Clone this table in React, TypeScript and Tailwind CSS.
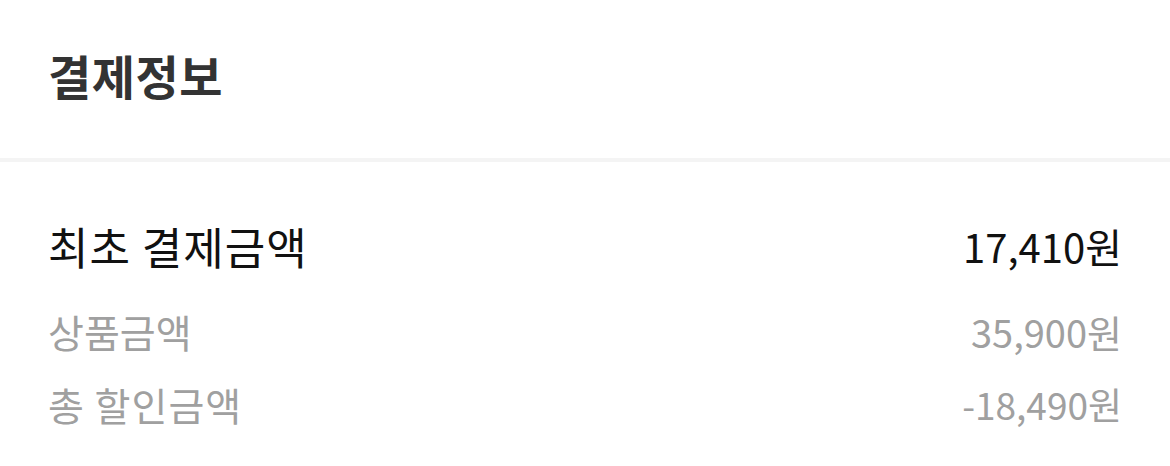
import React from 'react';

const font = { fontFamily: '"Noto Sans CJK KR", "Noto Sans", sans-serif' };

export default function App() {
  return (
    <div className="w-[1170px] h-[466px] bg-white overflow-hidden" style={font}>
      <div className="h-[158px] px-12 flex items-center">
        <h2 className="text-[47px] font-bold text-[#333333] leading-none tracking-[0.5px] -mt-[10px]">결제정보</h2>
      </div>
      <div className="h-[4px] bg-[#f4f4f4]" />
      <div className="px-12 pt-[62px]">
        <div className="flex items-center justify-between leading-none text-[#111111]">
          <span className="text-[44px] tracking-[1px]">최초 결제금액</span>
          <span className="text-[40px]">17,410원</span>
        </div>
        <div className="mt-[44px] flex items-center justify-between leading-none text-[#a0a0a0]">
          <span className="text-[39px]">상품금액</span>
          <span className="text-[38px]">35,900원</span>
        </div>
        <div className="mt-[34px] flex items-center justify-between leading-none text-[#a0a0a0]">
          <span className="text-[39px] tracking-[1px]">총 할인금액</span>
          <span className="text-[37px]">-18,490원</span>
        </div>
      </div>
    </div>
  );
}
